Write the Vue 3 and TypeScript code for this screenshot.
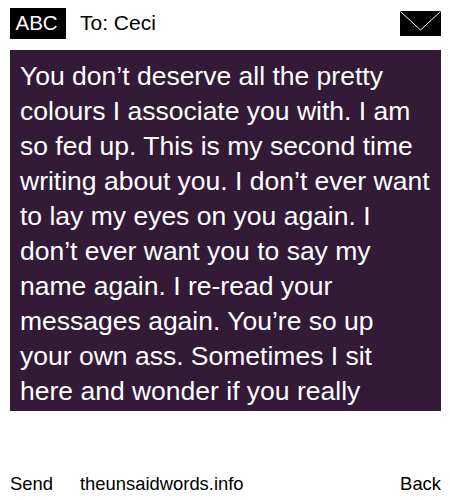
<script setup lang="ts">
const lines: string[] = [
  'You don’t deserve all the pretty',
  'colours I associate you with. I am',
  'so fed up. This is my second time',
  'writing about you. I don’t ever want',
  'to lay my eyes on you again. I',
  'don’t ever want you to say my',
  'name again. I re-read your',
  'messages again. You’re so up',
  'your own ass. Sometimes I sit',
  'here and wonder if you really',
]
</script>

<template>
  <div class="screen">
    <header class="top">
      <span class="abc">ABC</span>
      <span class="to">To: Ceci</span>
      <svg class="env" width="41" height="25" viewBox="0 0 41 25" aria-hidden="true">
        <rect width="41" height="25" fill="#000" />
        <path d="M0.5 0.5 L20.5 19 L40.5 0.5" fill="none" stroke="#fff" stroke-width="1" />
      </svg>
    </header>
    <main class="msg">
      <div v-for="(l, i) in lines" :key="i" class="line">{{ l }}</div>
    </main>
    <footer class="bottom">
      <span class="send">Send</span>
      <span class="site">theunsaidwords.info</span>
      <span class="back">Back</span>
    </footer>
  </div>
</template>

<style>
html, body { margin: 0; background: #fff; }
</style>

<style scoped>
.screen {
  width: 450px;
  height: 500px;
  box-sizing: border-box;
  padding: 8px 9px 0 10px;
  font-family: "Liberation Sans", Arial, sans-serif;
  color: #000;
  display: flex;
  flex-direction: column;
}
.top {
  height: 31px;
  display: flex;
  align-items: center;
}
.abc {
  width: 56px;
  height: 31px;
  box-sizing: border-box;
  padding-left: 5.5px;
  background: #000;
  color: #fff;
  font-size: 20.5px;
  line-height: 30px;
}
.to {
  margin-left: 14px;
  font-size: 21px;
  line-height: 30px;
  height: 31px;
}
.env {
  margin-left: auto;
  margin-top: -1px;
  display: block;
}
.msg {
  margin-top: 11px;
  height: 361px;
  box-sizing: border-box;
  padding: 8.5px 10px 0;
  background: #331b38;
  color: #fff;
  font-size: 26.5px;
  line-height: 35px;
  overflow: hidden;
}
.line { white-space: nowrap; }
.bottom {
  margin-top: 60.5px;
  display: flex;
  font-size: 18.4px;
  line-height: 24px;
}
.send { width: 70px; }
.site { flex: 1; }
</style>
